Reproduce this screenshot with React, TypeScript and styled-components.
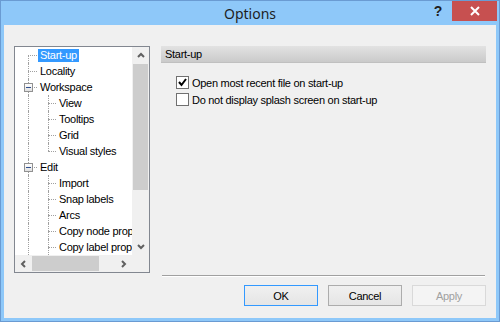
import styled, { createGlobalStyle } from 'styled-components';

const GlobalStyle = createGlobalStyle`
  html, body {
    margin: 0;
    padding: 0;
    width: 500px;
    height: 322px;
    overflow: hidden;
    background: #8ec8f9;
  }
  * {
    box-sizing: border-box;
  }
`;

const Window = styled.div`
  display: flex;
  flex-direction: column;
  width: 500px;
  height: 322px;
  border: 1px solid #6a9bd2;
  background: #8ec8f9;
  font-family: 'Liberation Sans', Arial, sans-serif;
  font-size: 11px;
  letter-spacing: -0.28px;
  color: #000;
`;

const TitleBar = styled.div`
  display: grid;
  grid-template-columns: 1fr auto 1fr;
  align-items: start;
  height: 24px;
`;

const Title = styled.div`
  grid-column: 2;
  padding-top: 3px;
  font-family: 'Noto Sans', 'Open Sans', sans-serif;
  font-size: 14px;
  letter-spacing: 0;
  color: #1e1e1e;
`;

const Controls = styled.div`
  grid-column: 3;
  display: flex;
  justify-content: flex-end;
  padding-right: 2px;
`;

const HelpButton = styled.div`
  display: flex;
  align-items: center;
  justify-content: center;
  width: 28px;
  height: 20px;
  font-family: 'Liberation Sans', Arial, sans-serif;
  font-weight: bold;
  font-size: 14px;
  color: #1e1e1e;
`;

const CloseButton = styled.div`
  display: flex;
  align-items: center;
  justify-content: center;
  width: 45px;
  height: 20px;
  background: #c75050;
`;

const Client = styled.div`
  flex: 1;
  margin: 0 3px 3px;
  background: #f0f0f0;
  display: flex;
  align-items: flex-start;
  gap: 11px;
  padding: 21px 10px 12px;
`;

const TreeBox = styled.div`
  display: grid;
  grid-template-columns: 1fr 17px;
  grid-template-rows: 1fr 17px;
  width: 136px;
  height: 227px;
  border: 1px solid #828790;
  background: #fff;
`;

const TreeList = styled.div`
  overflow: hidden;
  white-space: nowrap;
`;

const TreeRow = styled.div`
  display: flex;
  align-items: center;
  height: 16px;
`;

type GuideKind = 'first' | 'tee' | 'last' | 'pipe' | 'box';

const Guide = styled.div<{ $w: number; $x: number; $kind: GuideKind }>`
  position: relative;
  flex: none;
  width: ${(p) => p.$w}px;
  height: 16px;
  &::before {
    content: '';
    position: absolute;
    left: ${(p) => p.$x}px;
    top: ${(p) => (p.$kind === 'first' ? 8 : 0)}px;
    bottom: ${(p) => (p.$kind === 'last' ? 8 : 0)}px;
    border-left: 1px dotted #a0a0a0;
  }
  &::after {
    content: '';
    display: ${(p) => (p.$kind === 'pipe' ? 'none' : 'block')};
    position: absolute;
    left: ${(p) => p.$x}px;
    right: 1px;
    top: 8px;
    border-top: 1px dotted #a0a0a0;
  }
`;

const Expander = styled.div`
  position: absolute;
  z-index: 1;
  left: 9px;
  top: 4px;
  width: 9px;
  height: 9px;
  border: 1px solid #919191;
  background: linear-gradient(#ffffff, #e0e0e0);
  &::after {
    content: '';
    position: absolute;
    left: 1px;
    top: 3px;
    width: 5px;
    height: 1px;
    background: #2f4f8f;
  }
`;

const Label = styled.span<{ $selected?: boolean }>`
  display: inline-block;
  height: 13px;
  line-height: 13px;
  padding: 0 2px;
  background: ${(p) => (p.$selected ? '#3399ff' : 'transparent')};
  color: ${(p) => (p.$selected ? '#fff' : '#000')};
`;

const VScroll = styled.div`
  display: flex;
  flex-direction: column;
  background: #f0f0f0;
`;

const HScroll = styled.div`
  display: flex;
  background: #f0f0f0;
`;

const Corner = styled.div`
  background: #f0f0f0;
`;

const ArrowButton = styled.div`
  display: flex;
  align-items: center;
  justify-content: center;
  width: 17px;
  height: 17px;
  flex: none;
`;

const VThumb = styled.div`
  height: 126px;
  margin: 0 1px;
  background: #cdcdcd;
`;

const HThumb = styled.div`
  width: 67px;
  margin: 1px 0;
  background: #cdcdcd;
`;

const Track = styled.div`
  flex: 1;
`;

const RightColumn = styled.div`
  flex: 1;
  align-self: stretch;
  display: flex;
  flex-direction: column;
`;

const Panel = styled.div`
  flex: 1;
`;

const SectionHeader = styled.div`
  height: 17px;
  line-height: 17px;
  padding-left: 4px;
  background: linear-gradient(#e2e2e2, #cacaca);
  border-bottom: 1px solid #c0c0c0;
`;

const OptionList = styled.div`
  display: flex;
  flex-direction: column;
  margin-top: 11px;
  padding-left: 15px;
`;

const OptionRow = styled.label`
  display: flex;
  align-items: center;
  gap: 3px;
  height: 17px;
`;

const CheckBox = styled.span`
  display: flex;
  align-items: center;
  justify-content: center;
  width: 13px;
  height: 13px;
  border: 1px solid #707070;
  background: #fff;
`;

const Separator = styled.div`
  height: 2px;
  margin: 0 1px;
  border-top: 1px solid #a0a0a0;
  border-bottom: 1px solid #fff;
`;

const ButtonRow = styled.div`
  display: flex;
  justify-content: flex-end;
  gap: 10px;
  margin-top: 8px;
`;

const Button = styled.div<{ $variant?: 'default' | 'disabled' }>`
  display: flex;
  align-items: center;
  justify-content: center;
  width: 74px;
  height: 21px;
  border: 1px solid
    ${(p) =>
      p.$variant === 'default' ? '#3399ff' : p.$variant === 'disabled' ? '#d9d9d9' : '#acacac'};
  background: ${(p) =>
    p.$variant === 'disabled' ? '#f4f4f4' : 'linear-gradient(#f0f0f0, #e5e5e5)'};
  color: ${(p) => (p.$variant === 'disabled' ? '#a0a0a0' : '#000')};
`;

const Chevron = ({ dir }: { dir: 'up' | 'down' | 'left' | 'right' }) => {
  const pts = {
    up: '1,5 4,2 7,5',
    down: '1,2 4,5 7,2',
    left: '5,1 2,4 5,7',
    right: '2,1 5,4 2,7',
  }[dir];
  return (
    <svg width="8" height="8" viewBox="0 0 8 8">
      <polyline points={pts} fill="none" stroke="#606060" strokeWidth="2" />
    </svg>
  );
};

interface Node {
  label: string;
  level: 0 | 1;
  kind: GuideKind;
  selected?: boolean;
}

const nodes: Node[] = [
  { label: 'Start-up', level: 0, kind: 'first', selected: true },
  { label: 'Locality', level: 0, kind: 'tee' },
  { label: 'Workspace', level: 0, kind: 'box' },
  { label: 'View', level: 1, kind: 'tee' },
  { label: 'Tooltips', level: 1, kind: 'tee' },
  { label: 'Grid', level: 1, kind: 'tee' },
  { label: 'Visual styles', level: 1, kind: 'last' },
  { label: 'Edit', level: 0, kind: 'box' },
  { label: 'Import', level: 1, kind: 'tee' },
  { label: 'Snap labels', level: 1, kind: 'tee' },
  { label: 'Arcs', level: 1, kind: 'tee' },
  { label: 'Copy node properties', level: 1, kind: 'tee' },
  { label: 'Copy label properties', level: 1, kind: 'tee' },
];

const App = () => {
  return (
    <>
      <GlobalStyle />
      <Window>
        <TitleBar>
          <Title>Options</Title>
          <Controls>
            <HelpButton>?</HelpButton>
            <CloseButton>
              <svg width="10" height="10" viewBox="0 0 10 10">
                <path d="M1 1 L9 9 M9 1 L1 9" stroke="#fff" strokeWidth="2" />
              </svg>
            </CloseButton>
          </Controls>
        </TitleBar>
        <Client>
          <TreeBox>
            <TreeList>
              {nodes.map((n) => (
                <TreeRow key={n.label}>
                  {n.level === 0 ? (
                    <Guide $w={23} $x={13} $kind={n.kind}>
                      {n.kind === 'box' && <Expander />}
                    </Guide>
                  ) : (
                    <>
                      <Guide $w={23} $x={13} $kind="pipe" />
                      <Guide $w={19} $x={10} $kind={n.kind} />
                    </>
                  )}
                  <Label $selected={n.selected}>{n.label}</Label>
                </TreeRow>
              ))}
              <TreeRow>
                <Guide $w={23} $x={13} $kind="pipe" />
                <Guide $w={19} $x={10} $kind="pipe" />
              </TreeRow>
            </TreeList>
            <VScroll>
              <ArrowButton>
                <Chevron dir="up" />
              </ArrowButton>
              <VThumb />
              <Track />
              <ArrowButton>
                <Chevron dir="down" />
              </ArrowButton>
            </VScroll>
            <HScroll>
              <ArrowButton>
                <Chevron dir="left" />
              </ArrowButton>
              <HThumb />
              <Track />
              <ArrowButton>
                <Chevron dir="right" />
              </ArrowButton>
            </HScroll>
            <Corner />
          </TreeBox>
          <RightColumn>
            <Panel>
              <SectionHeader>Start-up</SectionHeader>
              <OptionList>
                <OptionRow>
                  <CheckBox>
                    <svg width="9" height="9" viewBox="0 0 9 9">
                      <path d="M1 4 L3.5 7 L8 1" fill="none" stroke="#000" strokeWidth="2" />
                    </svg>
                  </CheckBox>
                  Open most recent file on start-up
                </OptionRow>
                <OptionRow>
                  <CheckBox />
                  Do not display splash screen on start-up
                </OptionRow>
              </OptionList>
            </Panel>
            <Separator />
            <ButtonRow>
              <Button $variant="default">OK</Button>
              <Button>Cancel</Button>
              <Button $variant="disabled">Apply</Button>
            </ButtonRow>
          </RightColumn>
        </Client>
      </Window>
    </>
  );
};

export default App;
